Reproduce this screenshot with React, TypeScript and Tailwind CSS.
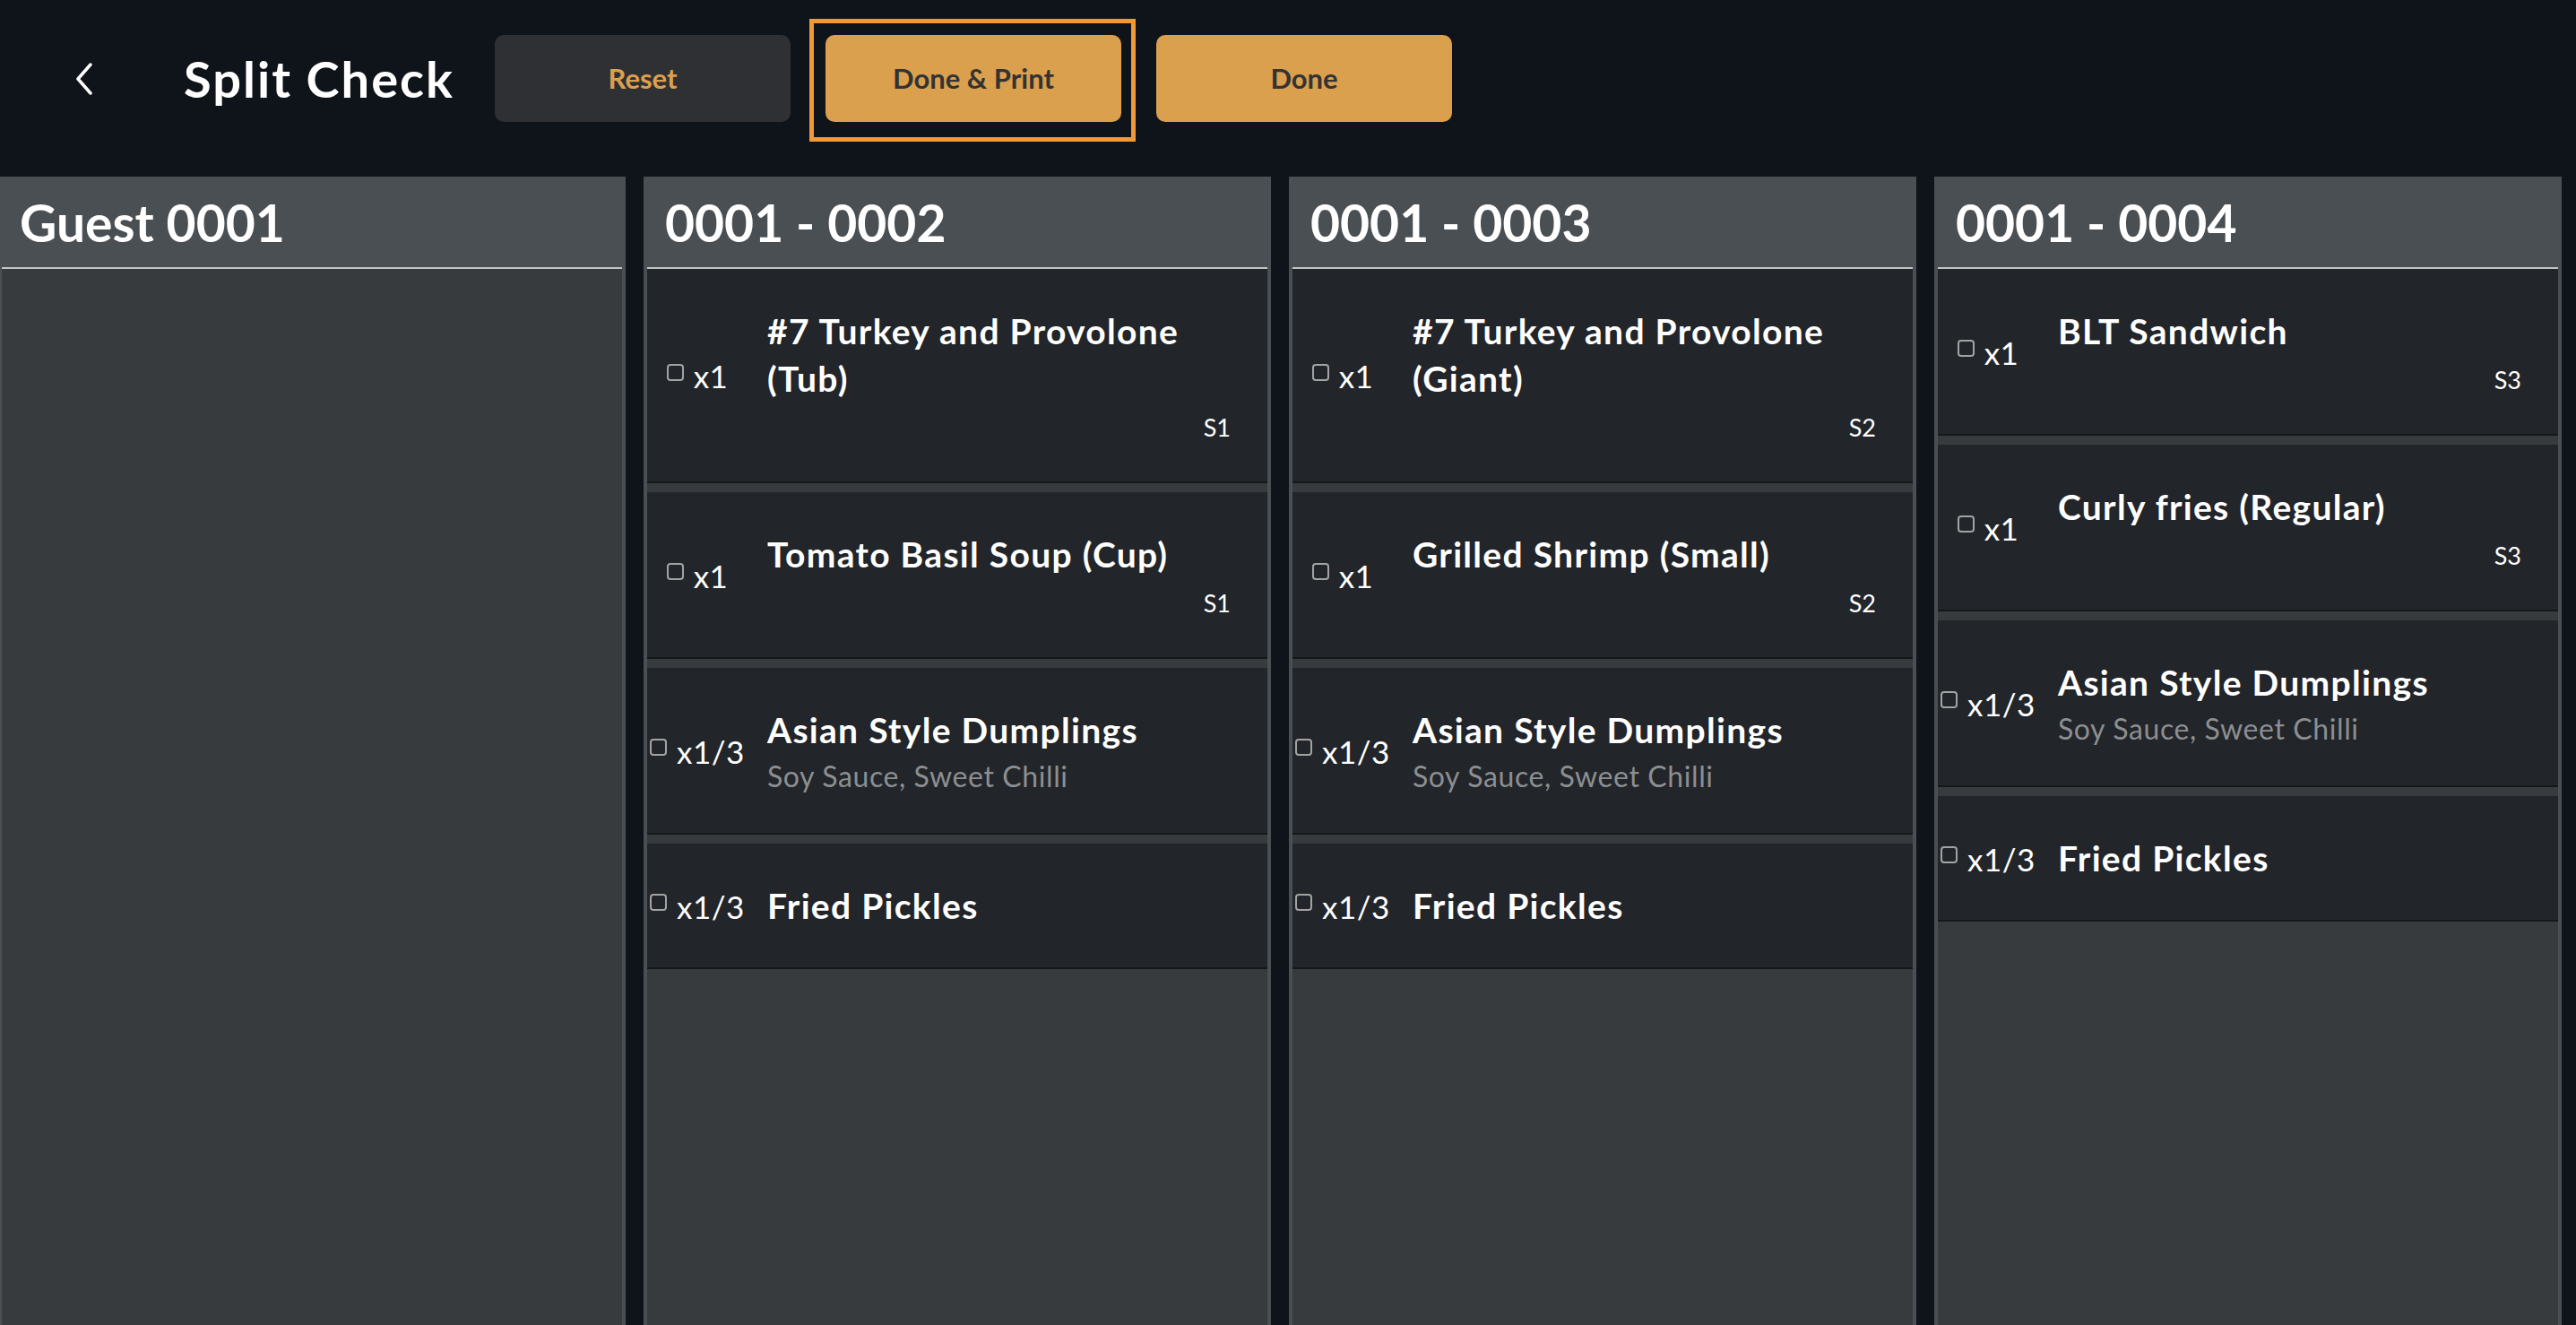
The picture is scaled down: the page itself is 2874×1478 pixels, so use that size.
import React from "react";

type Item = {
  qty: string;
  title: string;
  mods?: string;
  seat?: string;
};

const columns: { name: string; items: Item[] }[] = [
  { name: "Guest 0001", items: [] },
  {
    name: "0001 - 0002",
    items: [
      { qty: "x1", title: "#7 Turkey and Provolone (Tub)", seat: "S1" },
      { qty: "x1", title: "Tomato Basil Soup (Cup)", seat: "S1" },
      { qty: "x1/3", title: "Asian Style Dumplings", mods: "Soy Sauce, Sweet Chilli" },
      { qty: "x1/3", title: "Fried Pickles" },
    ],
  },
  {
    name: "0001 - 0003",
    items: [
      { qty: "x1", title: "#7 Turkey and Provolone (Giant)", seat: "S2" },
      { qty: "x1", title: "Grilled Shrimp (Small)", seat: "S2" },
      { qty: "x1/3", title: "Asian Style Dumplings", mods: "Soy Sauce, Sweet Chilli" },
      { qty: "x1/3", title: "Fried Pickles" },
    ],
  },
  {
    name: "0001 - 0004",
    items: [
      { qty: "x1", title: "BLT Sandwich", seat: "S3" },
      { qty: "x1", title: "Curly fries (Regular)", seat: "S3" },
      { qty: "x1/3", title: "Asian Style Dumplings", mods: "Soy Sauce, Sweet Chilli" },
      { qty: "x1/3", title: "Fried Pickles" },
    ],
  },
];

function ItemCard({ item }: { item: Item }) {
  return (
    <div className="bg-[#222529] border-b-2 border-[#15181b] flex items-center pt-[43px] pb-[42px] pr-[41px]">
      <div className="w-[112px] shrink-0 flex items-center justify-center gap-[11px]">
        <span className="w-[19px] h-[19px] border-2 border-[#a3a3a3] rounded-[4px] mb-[8px] shrink-0" />
        <span className="text-[35px] leading-[40px] text-white font-normal tracking-[0.5px]">{item.qty}</span>
      </div>
      <div className="ml-[22px] flex-1 flex flex-col">
        <div className="text-[39px] leading-[53px] font-bold text-white tracking-[1.3px]">{item.title}</div>
        {item.mods && (
          <div className="mt-[4px] text-[32px] leading-[42px] text-[#8c8f92] tracking-[0.6px]">{item.mods}</div>
        )}
        {item.seat && (
          <div className="mt-[10px] text-right text-[27px] leading-[36px] text-white">{item.seat}</div>
        )}
      </div>
    </div>
  );
}

export default function App() {
  return (
    <div className="w-[2874px] h-[1478px] bg-[#0f131a] overflow-hidden flex flex-col font-['Lato','Noto_Sans',sans-serif]">
      <div className="h-[197px] shrink-0 flex items-start pt-[39px]">
        <div className="h-[97px] flex items-center pl-[85px]">
          <svg width="20" height="36" viewBox="0 0 20 36" fill="none" className="shrink-0">
            <path d="M16 2 L2 18 L16 34" stroke="white" strokeWidth="3.5" strokeLinecap="round" strokeLinejoin="round" />
          </svg>
          <div className="ml-[100px] w-[347px] text-[56px] font-bold text-white leading-none tracking-[2px]">
            Split Check
          </div>
          <div className="flex items-center gap-[39px]">
            <button className="w-[330px] h-[97px] rounded-[10px] bg-[#2f3034] text-[#dba04e] text-[31px] font-bold">
              Reset
            </button>
            <button className="relative w-[330px] h-[97px] rounded-[10px] bg-[#dba04e] text-[#333333] text-[31px] font-bold">
              <span className="absolute top-[-18px] bottom-[-22px] left-[-18px] right-[-16px] border-[5px] border-[#f0993a] pointer-events-none" />
              Done &amp; Print
            </button>
            <button className="w-[330px] h-[97px] rounded-[10px] bg-[#dba04e] text-[#333333] text-[31px] font-bold">
              Done
            </button>
          </div>
        </div>
      </div>
      <div className="flex-1 flex gap-[20px] ml-[-2px] min-h-0">
        {columns.map((col) => (
          <div key={col.name} className="w-[700px] shrink-0 bg-[#4a4f54] flex flex-col">
            <div className="h-[101px] shrink-0 flex items-center px-[24px] pt-[2px]">
              <span className="text-[57px] font-bold text-white leading-none">{col.name}</span>
            </div>
            <div className="flex-1 mx-[4px] border-t-2 border-[#c4c4c4] bg-[#383b3e] flex flex-col gap-[10px]">
              {col.items.map((it, i) => (
                <ItemCard key={i} item={it} />
              ))}
            </div>
          </div>
        ))}
      </div>
    </div>
  );
}
